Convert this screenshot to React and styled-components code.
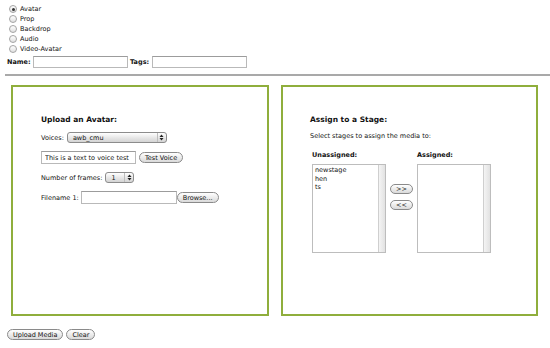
import React from 'react';
import styled, { createGlobalStyle } from 'styled-components';

const GlobalStyle = createGlobalStyle`
  html, body {
    margin: 0;
    padding: 0;
    background: #ffffff;
  }
  body {
    font-family: "DejaVu Sans", Verdana, sans-serif;
    font-size: 6.5px;
    color: #111;
  }
`;

const mediaTypes = ['Avatar', 'Prop', 'Backdrop', 'Audio', 'Video-Avatar'];
const stages = ['newstage', 'hen', 'ts'];

const App = () => {
  return (
    <Page>
      <GlobalStyle />
      <TypeList>
        {mediaTypes.map((t) => (
          <RadioRow key={t}>
            <Radio checked={t === 'Avatar'} />
            <span>{t}</span>
          </RadioRow>
        ))}
      </TypeList>
      <MetaRow>
        <BoldLabel width={24}>Name:</BoldLabel>
        <TextBox width={95} />
        <BoldLabel width={20}>Tags:</BoldLabel>
        <TextBox width={95} />
      </MetaRow>
      <Rule />
      <Panels>
        <Panel>
          <Title>Upload an Avatar:</Title>
          <FormRow>
            <span>Voices:</span>
            <Select width={100}>
              <span>awb_cmu</span>
              <Stepper />
            </Select>
          </FormRow>
          <FormRow>
            <TextBox width={95} tall defaultValue="This is a text to voice test" />
            <Button>Test Voice</Button>
          </FormRow>
          <FormRow>
            <span>Number of frames:</span>
            <Select width={29}>
              <span>1</span>
              <Stepper />
            </Select>
          </FormRow>
          <FormRow gap={0}>
            <span>Filename 1:</span>
            <TextBox width={96} tall offset={2} />
            <Button>Browse...</Button>
          </FormRow>
        </Panel>
        <Panel right>
          <Title>Assign to a Stage:</Title>
          <Hint>Select stages to assign the media to:</Hint>
          <StageGrid>
            <ColHead>Unassigned:</ColHead>
            <span />
            <ColHead>Assigned:</ColHead>
            <ListBox>
              <ListItems>
                {stages.map((s) => (
                  <div key={s}>{s}</div>
                ))}
              </ListItems>
              <Scroll />
            </ListBox>
            <MoveButtons>
              <Button small>&gt;&gt;</Button>
              <Button small>&lt;&lt;</Button>
            </MoveButtons>
            <ListBox>
              <ListItems />
              <Scroll />
            </ListBox>
          </StageGrid>
        </Panel>
      </Panels>
      <Actions>
        <Button>Upload Media</Button>
        <Button>Clear</Button>
      </Actions>
    </Page>
  );
};

export default App;

const Stepper = () => (
  <StepBox>
    <svg width="5" height="7" viewBox="0 0 5 7">
      <path d="M2.5 0.5 L4.5 3 L0.5 3 Z" fill="#222" />
      <path d="M0.5 4 L4.5 4 L2.5 6.5 Z" fill="#222" />
    </svg>
  </StepBox>
);

const Page = styled.div`
  width: 550px;
  height: 348px;
  padding-top: 4px;
  box-sizing: border-box;
`;

const TypeList = styled.div`
  display: flex;
  flex-direction: column;
  padding-left: 9px;
`;

const RadioRow = styled.div`
  display: flex;
  align-items: center;
  gap: 3px;
  height: 10px;
`;

const Radio = styled.span`
  position: relative;
  width: 8px;
  height: 8px;
  border-radius: 50%;
  box-sizing: border-box;
  border: 1px solid #a4a4a4;
  background: linear-gradient(#ffffff, #e0e0e0);
  &::after {
    content: '';
    display: ${(p) => (p.checked ? 'block' : 'none')};
    position: absolute;
    left: 1.5px;
    top: 1.5px;
    width: 3px;
    height: 3px;
    border-radius: 50%;
    background: #333;
  }
`;

const MetaRow = styled.div`
  display: flex;
  align-items: center;
  margin-top: 2px;
  padding-left: 7px;
  gap: 2px;
`;

const BoldLabel = styled.span`
  font-weight: bold;
  font-size: 6.5px;
  width: ${(p) => p.width}px;
`;

const TextBox = styled.input.attrs({ type: 'text' })`
  width: ${(p) => p.width}px;
  height: ${(p) => (p.tall ? 13 : 12)}px;
  box-sizing: border-box;
  border: 1px solid #b9b9b9;
  border-top-color: #9c9c9c;
  padding: 0 3px;
  margin: 0 0 0 ${(p) => p.offset || 0}px;
  font-family: inherit;
  font-size: 6.5px;
  color: #111;
  background: #fff;
  outline: none;
`;

const Rule = styled.div`
  margin: 6px 0 0 5px;
  height: 2px;
  background: #a9a9a9;
`;

const Panels = styled.div`
  display: flex;
  gap: 12px;
  margin: 9px 0 0 11px;
`;

const Panel = styled.div`
  width: ${(p) => (p.right ? 257 : 258)}px;
  height: 231px;
  box-sizing: border-box;
  border: 2px solid #8fae3c;
  padding: 28px 0 0 ${(p) => (p.right ? 27 : 28)}px;
  display: flex;
  flex-direction: column;
`;

const Title = styled.div`
  font-weight: bold;
  font-size: 7.5px;
  line-height: 9px;
`;

const FormRow = styled.div`
  display: flex;
  align-items: center;
  gap: ${(p) => p.gap ?? 3}px;
  margin-top: 7px;
  height: 13px;
`;

const Select = styled.div`
  width: ${(p) => p.width}px;
  height: 11px;
  box-sizing: border-box;
  border: 1px solid #8c8c8c;
  border-radius: 3px;
  background: linear-gradient(#ffffff, #e6e6e6 55%, #d4d4d4);
  display: flex;
  align-items: center;
  justify-content: space-between;
  padding-left: 5px;
  font-size: 6.5px;
`;

const StepBox = styled.span`
  display: flex;
  align-items: center;
  justify-content: center;
  width: 8px;
  height: 100%;
  border-left: 1px solid #bdbdbd;
`;

const Button = styled.button`
  height: ${(p) => (p.small ? 10 : 11)}px;
  width: ${(p) => (p.small ? '23px' : 'auto')};
  padding: 0 ${(p) => (p.small ? 0 : 5)}px;
  margin: 0;
  box-sizing: border-box;
  border: 1px solid #8a8a8a;
  border-radius: 6px;
  background: linear-gradient(#ffffff, #ececec 50%, #dadada);
  font-family: inherit;
  font-size: 6.5px;
  line-height: 8px;
  color: #111;
`;

const Hint = styled.div`
  margin-top: 8px;
  line-height: 9px;
`;

const StageGrid = styled.div`
  display: grid;
  grid-template-columns: 74px 23px 74px;
  column-gap: 4px;
  row-gap: 5px;
  margin: 10px 0 0 2px;
`;

const ColHead = styled.span`
  font-weight: bold;
  font-size: 6.5px;
  line-height: 8px;
`;

const ListBox = styled.div`
  height: 89px;
  box-sizing: border-box;
  border: 1px solid #bdbdbd;
  display: flex;
`;

const ListItems = styled.div`
  flex: 1;
  padding: 1px 2px;
  line-height: 8.5px;
`;

const Scroll = styled.div`
  width: 6px;
  border-left: 1px solid #cfcfcf;
  background: linear-gradient(90deg, #f4f4f4, #e2e2e2);
`;

const MoveButtons = styled.div`
  display: flex;
  flex-direction: column;
  gap: 6px;
  padding-top: 20px;
`;

const Actions = styled.div`
  display: flex;
  gap: 3px;
  margin: 13px 0 0 7px;
`;
